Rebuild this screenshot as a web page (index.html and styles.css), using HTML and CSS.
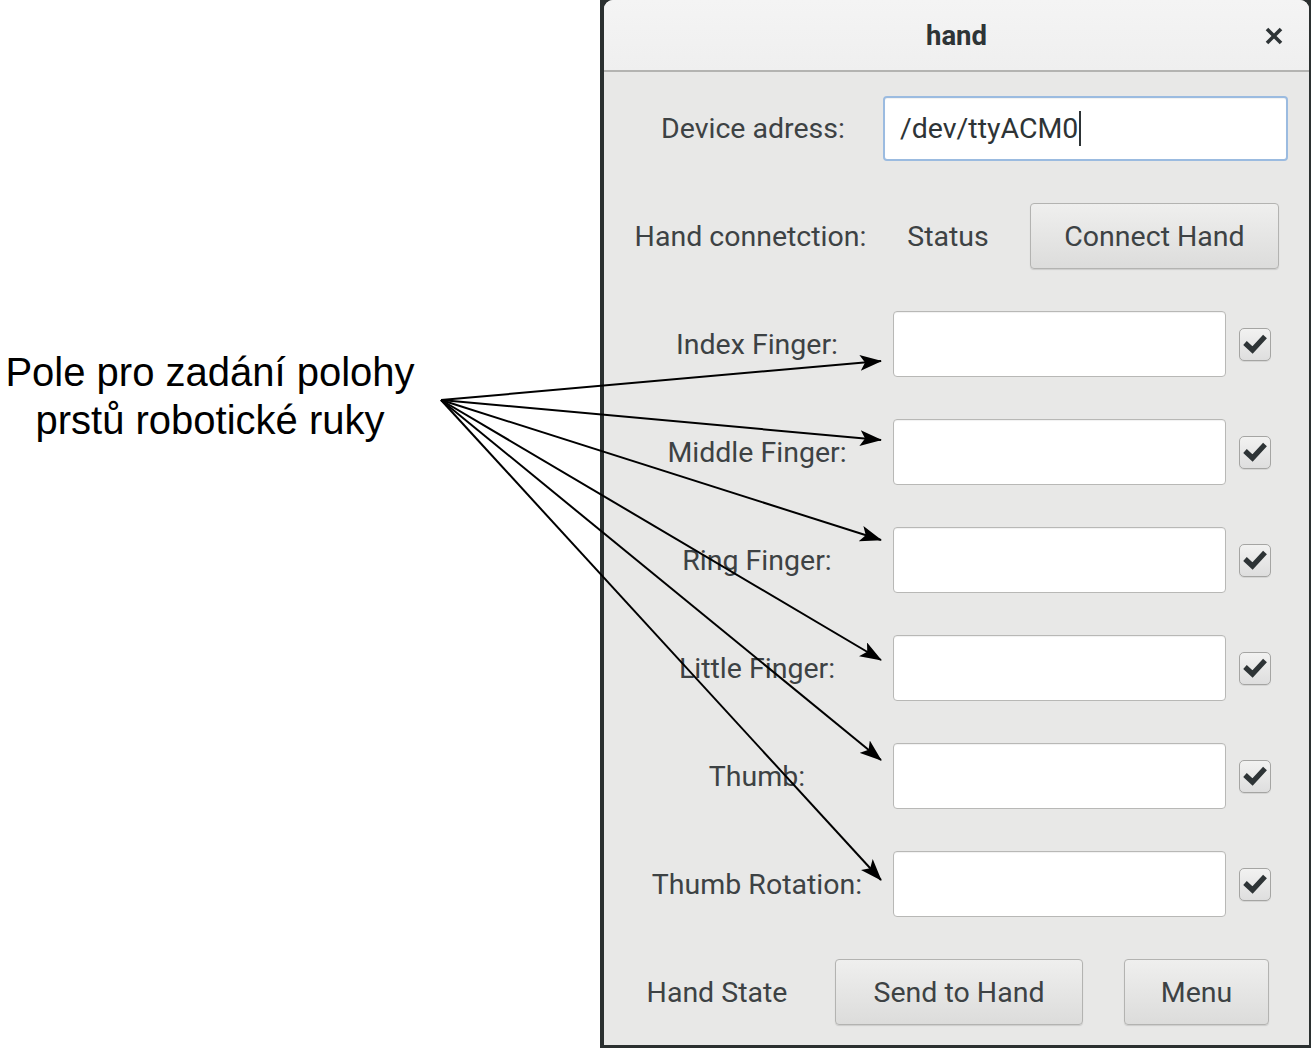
FILE: index.html
```html
<!DOCTYPE html>
<html lang="cs">
<head>
<meta charset="utf-8">
<title>hand</title>
<link rel="stylesheet" href="styles.css">
</head>
<body>
<div class="page">
  <div class="note">
    <p class="note-text">Pole pro zadání polohy<br>prstů robotické ruky</p>
  </div>
  <div class="frame">
    <div class="window">
      <header class="titlebar">
        <span class="title">hand</span>
        <span class="close" aria-label="close">
          <svg width="18" height="18" viewBox="0 0 18 18"><path d="M2 2 L16 16 M16 2 L2 16" stroke="#2e3436" stroke-width="3.6" stroke-linecap="butt"/></svg>
        </span>
      </header>
      <main class="content">
        <div class="row">
          <span class="label label-dev">Device adress:</span>
          <div class="entry entry-focus entry-dev"><span class="entry-text">/dev/ttyACM0</span><span class="caret"></span></div>
        </div>
        <div class="row">
          <span class="label label-conn">Hand connetction:</span>
          <span class="label label-status">Status</span>
          <button class="btn btn-connect">Connect Hand</button>
        </div>
        <div class="row">
          <span class="label label-finger">Index Finger:</span>
          <div class="entry entry-finger"></div>
          <span class="check"><svg width="24" height="20" viewBox="0 0 24 20"><path d="M2 9 L9.5 16 L22 2.5" fill="none" stroke="#2e3436" stroke-width="5.2"/></svg></span>
        </div>
        <div class="row">
          <span class="label label-finger">Middle Finger:</span>
          <div class="entry entry-finger"></div>
          <span class="check"><svg width="24" height="20" viewBox="0 0 24 20"><path d="M2 9 L9.5 16 L22 2.5" fill="none" stroke="#2e3436" stroke-width="5.2"/></svg></span>
        </div>
        <div class="row">
          <span class="label label-finger">Ring Finger:</span>
          <div class="entry entry-finger"></div>
          <span class="check"><svg width="24" height="20" viewBox="0 0 24 20"><path d="M2 9 L9.5 16 L22 2.5" fill="none" stroke="#2e3436" stroke-width="5.2"/></svg></span>
        </div>
        <div class="row">
          <span class="label label-finger">Little Finger:</span>
          <div class="entry entry-finger"></div>
          <span class="check"><svg width="24" height="20" viewBox="0 0 24 20"><path d="M2 9 L9.5 16 L22 2.5" fill="none" stroke="#2e3436" stroke-width="5.2"/></svg></span>
        </div>
        <div class="row">
          <span class="label label-finger">Thumb:</span>
          <div class="entry entry-finger"></div>
          <span class="check"><svg width="24" height="20" viewBox="0 0 24 20"><path d="M2 9 L9.5 16 L22 2.5" fill="none" stroke="#2e3436" stroke-width="5.2"/></svg></span>
        </div>
        <div class="row">
          <span class="label label-finger">Thumb Rotation:</span>
          <div class="entry entry-finger"></div>
          <span class="check"><svg width="24" height="20" viewBox="0 0 24 20"><path d="M2 9 L9.5 16 L22 2.5" fill="none" stroke="#2e3436" stroke-width="5.2"/></svg></span>
        </div>
        <div class="row">
          <span class="label label-state">Hand State</span>
          <button class="btn btn-send">Send to Hand</button>
          <button class="btn btn-menu">Menu</button>
        </div>
      </main>
    </div>
  </div>
  <svg class="arrows" width="1314" height="1050" viewBox="0 0 1314 1050">
    <defs>
      <marker id="head" markerWidth="22" markerHeight="16" refX="21" refY="8" orient="auto" markerUnits="userSpaceOnUse">
        <path d="M0 0 L22 8 L0 16 L5 8 Z" fill="#000"/>
      </marker>
    </defs>
    <g stroke="#000" stroke-width="2" fill="none">
      <line x1="441" y1="400" x2="881" y2="361" marker-end="url(#head)"/>
      <line x1="441" y1="400" x2="881" y2="440" marker-end="url(#head)"/>
      <line x1="441" y1="400" x2="881" y2="540" marker-end="url(#head)"/>
      <line x1="441" y1="400" x2="881" y2="660" marker-end="url(#head)"/>
      <line x1="441" y1="400" x2="881" y2="760" marker-end="url(#head)"/>
      <line x1="441" y1="400" x2="881" y2="880" marker-end="url(#head)"/>
    </g>
  </svg>
</div>
</body>
</html>
```

FILE: styles.css
```css
html, body {
  margin: 0;
  padding: 0;
  background: #ffffff;
}

.page {
  position: relative;
  width: 1314px;
  height: 1050px;
  display: flex;
  align-items: flex-start;
  overflow: hidden;
}

.note {
  width: 600px;
  flex: none;
}

.note-text {
  margin: 348px 0 0 0;
  width: 420px;
  text-align: center;
  font-family: "Liberation Sans", Arial, sans-serif;
  font-size: 40px;
  line-height: 48px;
  color: #000;
}

.frame {
  flex: none;
  width: 711px;
  height: 1048px;
  box-sizing: border-box;
  background: #2b3030;
  padding: 0 2px 3px 4px;
}

.window {
  height: 100%;
  display: flex;
  flex-direction: column;
  background: #e8e8e7;
  border-radius: 9px 9px 0 0;
  overflow: hidden;
  font-family: Roboto, "Noto Sans", sans-serif;
  color: #3d4244;
}

.titlebar {
  flex: none;
  height: 70px;
  background: linear-gradient(#f4f4f4, #efefef);
  border-bottom: 2px solid #b3b3b1;
  display: flex;
  align-items: center;
  justify-content: center;
  position: relative;
}

.title {
  font-weight: 700;
  font-size: 27.5px;
  color: #2e3436;
}

.close {
  position: absolute;
  right: 26px;
  top: 27px;
  width: 18px;
  height: 18px;
  display: flex;
}

.content {
  flex: 1;
  display: flex;
  flex-direction: column;
  gap: 42px;
  padding: 23px 0 0 20px;
}

.row {
  height: 66px;
  display: flex;
  align-items: center;
}

.label {
  font-size: 28.5px;
  text-align: center;
  flex: none;
}

.label-dev { width: 258px; }
.label-conn { width: 253px; }
.label-status { width: 142px; }
.label-finger { width: 266px; }
.label-state { width: 186px; }

.entry {
  flex: none;
  box-sizing: border-box;
  height: 66px;
  background: #ffffff;
  border: 1px solid #b8b8b6;
  border-radius: 4px;
  box-shadow: inset 0 1px 1px rgba(0, 0, 0, 0.06);
  display: flex;
  align-items: center;
}

.entry-dev {
  width: 405px;
  height: 65px;
  margin-left: 1px;
  padding-left: 15px;
}

.entry-focus {
  border: 2px solid #9bbbe0;
}

.entry-text {
  font-size: 28.5px;
  color: #2e3436;
}

.caret {
  width: 2px;
  height: 35px;
  background: #2e3436;
  margin-left: 1px;
}

.entry-finger {
  width: 333px;
  margin-left: 3px;
}

.check {
  flex: none;
  box-sizing: border-box;
  width: 32px;
  height: 33px;
  margin-left: 13px;
  border: 1px solid #a5a5a3;
  border-radius: 5px;
  background: linear-gradient(#f2f2f1, #dedede);
  box-shadow: 0 1px 0 rgba(0, 0, 0, 0.08);
  display: flex;
  align-items: center;
  justify-content: center;
}

.btn {
  flex: none;
  box-sizing: border-box;
  height: 66px;
  border: 1px solid #b3b3b1;
  border-radius: 4px;
  background: linear-gradient(#efefee, #dcdcdb);
  box-shadow: 0 1px 1px rgba(0, 0, 0, 0.12);
  font-family: Roboto, "Noto Sans", sans-serif;
  font-size: 28.5px;
  color: #3d4244;
  padding: 0;
}

.btn-connect { width: 249px; margin-left: 11px; }
.btn-send { width: 248px; margin-left: 25px; }
.btn-menu { width: 145px; margin-left: 41px; }

.arrows {
  position: absolute;
  left: 0;
  top: 0;
  pointer-events: none;
}
```
